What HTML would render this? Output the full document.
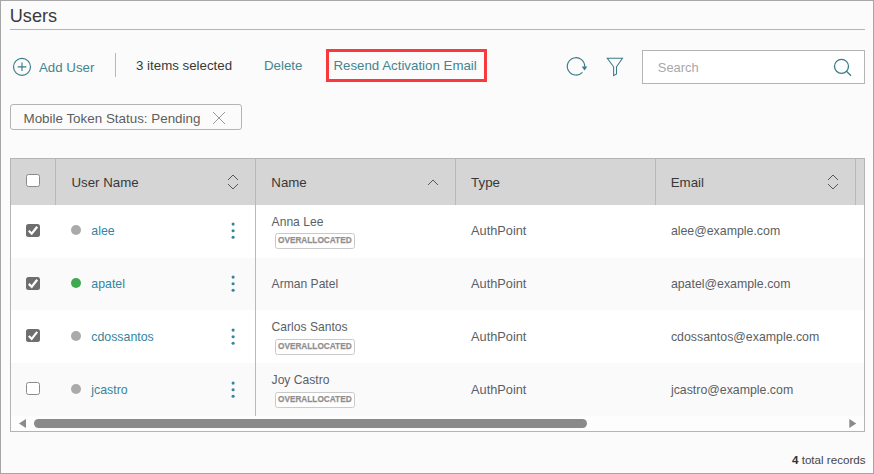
<!DOCTYPE html><html><head><meta charset="utf-8"><style>
html,body{margin:0;padding:0;}
body{width:874px;height:474px;overflow:hidden;position:relative;background:#fbfbfb;font-family:"Liberation Sans",sans-serif;}
.t{position:absolute;white-space:nowrap;}
.b{position:absolute;box-sizing:border-box;}
svg{position:absolute;left:0;top:0;overflow:visible;}
</style></head><body>
<div class="b" style="left:0;top:0;width:874px;height:474px;border:1px solid #a6a6a6;"></div>
<div class="t" style="left:9.8px;top:6.58px;font-size:18.1px;line-height:18.1px;color:#3a3a3a;font-weight:normal;">Users</div>
<div class="b" style="left:10px;top:29px;width:855px;height:1px;background:#b4b4b4;"></div>
<svg width="874" height="474"><circle cx="22" cy="66.8" r="8.5" fill="none" stroke="#3a7b89" stroke-width="1.15"/><path d="M22 62.5V71.1M17.7 66.8H26.3" stroke="#3a7b89" stroke-width="1.15"/></svg>
<div class="t" style="left:39px;top:60.64px;font-size:13.3px;line-height:13.3px;color:#438591;font-weight:normal;">Add User</div>
<div class="b" style="left:115px;top:53px;width:1px;height:24px;background:#b8b8b8;"></div>
<div class="t" style="left:136px;top:58.64px;font-size:13.3px;line-height:13.3px;color:#383838;font-weight:normal;">3 items selected</div>
<div class="t" style="left:264px;top:58.94px;font-size:13.3px;line-height:13.3px;color:#438591;font-weight:normal;">Delete</div>
<div class="b" style="left:326px;top:49px;width:161px;height:33px;border:3px solid #f83a3d;"></div>
<div class="t" style="left:333.4px;top:58.94px;font-size:13.3px;line-height:13.3px;color:#438591;font-weight:normal;">Resend Activation Email</div>
<svg width="874" height="474"><path d="M582.4 72.3 A8.7 8.7 0 1 1 584.7 66.8" fill="none" stroke="#3a7b89" stroke-width="1.15"/><path d="M581.7 66.6 L587.3 66.6 L584.5 70.5 Z" fill="#3a7b89"/></svg>
<svg width="874" height="474"><path d="M607.3 58.3 H622.5 L616.5 66.8 V73.9 L613.6 75.6 V66.8 Z" fill="none" stroke="#3a7b89" stroke-width="1.05"/></svg>
<div class="b" style="left:642px;top:50px;width:223px;height:34px;border:1px solid #b4b4b4;background:#fff;border-radius:0;"></div>
<div class="t" style="left:657.8px;top:62.28px;font-size:12.9px;line-height:12.9px;color:#a8a8a8;font-weight:normal;">Search</div>
<svg width="874" height="474"><circle cx="841.5" cy="66.3" r="7" fill="none" stroke="#3a7b89" stroke-width="1.3"/><path d="M846.5 71.3 L851 75.7" stroke="#3a7b89" stroke-width="1.3"/></svg>
<div class="b" style="left:10px;top:104px;width:232px;height:26px;border:1px solid #b4b4b4;border-radius:3px;background:#fbfbfb;"></div>
<div class="t" style="left:23.5px;top:111.86px;font-size:13.4px;line-height:13.4px;color:#5e5e5e;font-weight:normal;">Mobile Token Status: Pending</div>
<svg width="874" height="474"><path d="M213 112 L225 124 M225 112 L213 124" stroke="#9a9a9a" stroke-width="1"/></svg>
<div class="b" style="left:10px;top:158px;width:855px;height:274px;border:1px solid #b4b4b4;background:#fff;"></div>
<div class="b" style="left:11px;top:159px;width:853px;height:46px;background:#d5d5d5;"></div>
<div class="b" style="left:55px;top:159px;width:1px;height:46px;background:#b9b9b9;"></div>
<div class="b" style="left:255px;top:159px;width:1px;height:46px;background:#b9b9b9;"></div>
<div class="b" style="left:455px;top:159px;width:1px;height:46px;background:#b9b9b9;"></div>
<div class="b" style="left:655px;top:159px;width:1px;height:46px;background:#b9b9b9;"></div>
<div class="b" style="left:855px;top:159px;width:1px;height:46px;background:#b9b9b9;"></div>
<div class="b" style="left:26px;top:174px;width:13.5px;height:13px;border:1.3px solid #8a8a8a;border-radius:2.5px;background:#fff;"></div>
<div class="t" style="left:71.4px;top:175.84px;font-size:13.3px;line-height:13.3px;color:#383838;font-weight:normal;">User Name</div>
<div class="t" style="left:271.3px;top:175.84px;font-size:13.3px;line-height:13.3px;color:#383838;font-weight:normal;">Name</div>
<div class="t" style="left:471.1px;top:175.84px;font-size:13.3px;line-height:13.3px;color:#383838;font-weight:normal;">Type</div>
<div class="t" style="left:670.7px;top:175.84px;font-size:13.3px;line-height:13.3px;color:#383838;font-weight:normal;">Email</div>
<svg width="874" height="474"><path d="M228 180 L233 175 L238 180 M228 184 L233 189 L238 184" fill="none" stroke="#4a4a4a" stroke-width="0.9"/></svg>
<svg width="874" height="474"><path d="M828 180 L833 175 L838 180 M828 184 L833 189 L838 184" fill="none" stroke="#4a4a4a" stroke-width="0.9"/></svg>
<svg width="874" height="474"><path d="M428 185 L433 180 L438 185" fill="none" stroke="#4a4a4a" stroke-width="0.9"/></svg>
<div class="b" style="left:11px;top:205px;width:853px;height:53px;background:#fff;"></div>
<div class="b" style="left:26px;top:223.8px;width:13.5px;height:13px;background:#6e6e6e;border-radius:2.5px;"></div>
<svg width="874" height="474"><path d="M28.8 230.8 L31.7 233.7 L37.2 226.7" fill="none" stroke="#fff" stroke-width="2.2"/></svg>
<div class="b" style="left:71px;top:225px;width:10px;height:10px;border-radius:50%;background:#aaaaaa;"></div>
<div class="t" style="left:91.3px;top:225.35px;font-size:12.35px;line-height:12.35px;color:#3584a0;font-weight:normal;">alee</div>
<svg width="874" height="474"><circle cx="233.1" cy="224.1" r="1.55" fill="#3584a0"/><circle cx="233.1" cy="230.7" r="1.55" fill="#3584a0"/><circle cx="233.1" cy="237.3" r="1.55" fill="#3584a0"/></svg>
<div class="t" style="left:271.6px;top:215.86px;font-size:12.1px;line-height:12.1px;color:#5a5f65;font-weight:normal;">Anna Lee</div>
<div class="b" style="left:275px;top:233px;width:80px;height:16px;border:1px solid #c9c9c9;border-radius:2.5px;background:#fff;"></div>
<div class="t" style="left:278.1px;top:234.82px;font-size:9.9px;line-height:9.9px;color:#8f8f8f;font-weight:bold;transform:scaleX(0.835);transform-origin:0 0;-webkit-text-stroke:0.25px #8f8f8f;">OVERALLOCATED</div>
<div class="t" style="left:471.1px;top:224.81px;font-size:12.75px;line-height:12.75px;color:#5a5f65;font-weight:normal;">AuthPoint</div>
<div class="t" style="left:670.9px;top:225.15px;font-size:12.35px;line-height:12.35px;color:#5a5f65;font-weight:normal;">alee@example.com</div>
<div class="b" style="left:11px;top:258px;width:853px;height:52px;background:#fafafa;"></div>
<div class="b" style="left:26px;top:276.9px;width:13.5px;height:13px;background:#6e6e6e;border-radius:2.5px;"></div>
<svg width="874" height="474"><path d="M28.8 283.9 L31.7 286.8 L37.2 279.8" fill="none" stroke="#fff" stroke-width="2.2"/></svg>
<div class="b" style="left:71px;top:278px;width:10px;height:10px;border-radius:50%;background:#3daa4f;"></div>
<div class="t" style="left:91.3px;top:278.35px;font-size:12.35px;line-height:12.35px;color:#3584a0;font-weight:normal;">apatel</div>
<svg width="874" height="474"><circle cx="233.1" cy="277.1" r="1.55" fill="#3584a0"/><circle cx="233.1" cy="283.7" r="1.55" fill="#3584a0"/><circle cx="233.1" cy="290.3" r="1.55" fill="#3584a0"/></svg>
<div class="t" style="left:271.6px;top:278.16px;font-size:12.1px;line-height:12.1px;color:#5a5f65;font-weight:normal;">Arman Patel</div>
<div class="t" style="left:471.1px;top:277.81px;font-size:12.75px;line-height:12.75px;color:#5a5f65;font-weight:normal;">AuthPoint</div>
<div class="t" style="left:670.9px;top:278.15px;font-size:12.35px;line-height:12.35px;color:#5a5f65;font-weight:normal;">apatel@example.com</div>
<div class="b" style="left:11px;top:310px;width:853px;height:53px;background:#fff;"></div>
<div class="b" style="left:26px;top:329px;width:13.5px;height:13px;background:#6e6e6e;border-radius:2.5px;"></div>
<svg width="874" height="474"><path d="M28.8 336.0 L31.7 338.9 L37.2 331.9" fill="none" stroke="#fff" stroke-width="2.2"/></svg>
<div class="b" style="left:71px;top:331px;width:10px;height:10px;border-radius:50%;background:#aaaaaa;"></div>
<div class="t" style="left:91.3px;top:331.35px;font-size:12.35px;line-height:12.35px;color:#3584a0;font-weight:normal;">cdossantos</div>
<svg width="874" height="474"><circle cx="233.1" cy="330.1" r="1.55" fill="#3584a0"/><circle cx="233.1" cy="336.7" r="1.55" fill="#3584a0"/><circle cx="233.1" cy="343.3" r="1.55" fill="#3584a0"/></svg>
<div class="t" style="left:271.6px;top:320.86px;font-size:12.1px;line-height:12.1px;color:#5a5f65;font-weight:normal;">Carlos Santos</div>
<div class="b" style="left:275px;top:339px;width:80px;height:16px;border:1px solid #c9c9c9;border-radius:2.5px;background:#fff;"></div>
<div class="t" style="left:278.1px;top:340.82px;font-size:9.9px;line-height:9.9px;color:#8f8f8f;font-weight:bold;transform:scaleX(0.835);transform-origin:0 0;-webkit-text-stroke:0.25px #8f8f8f;">OVERALLOCATED</div>
<div class="t" style="left:471.1px;top:330.81px;font-size:12.75px;line-height:12.75px;color:#5a5f65;font-weight:normal;">AuthPoint</div>
<div class="t" style="left:670.9px;top:331.15px;font-size:12.35px;line-height:12.35px;color:#5a5f65;font-weight:normal;">cdossantos@example.com</div>
<div class="b" style="left:11px;top:363px;width:853px;height:53px;background:#fafafa;"></div>
<div class="b" style="left:26px;top:381.9px;width:13.5px;height:13px;border:1.3px solid #8a8a8a;border-radius:2.5px;background:#fff;"></div>
<div class="b" style="left:71px;top:384px;width:10px;height:10px;border-radius:50%;background:#aaaaaa;"></div>
<div class="t" style="left:91.3px;top:384.35px;font-size:12.35px;line-height:12.35px;color:#3584a0;font-weight:normal;">jcastro</div>
<svg width="874" height="474"><circle cx="233.1" cy="383.1" r="1.55" fill="#3584a0"/><circle cx="233.1" cy="389.7" r="1.55" fill="#3584a0"/><circle cx="233.1" cy="396.3" r="1.55" fill="#3584a0"/></svg>
<div class="t" style="left:271.6px;top:373.86px;font-size:12.1px;line-height:12.1px;color:#5a5f65;font-weight:normal;">Joy Castro</div>
<div class="b" style="left:275px;top:392px;width:80px;height:16px;border:1px solid #c9c9c9;border-radius:2.5px;background:#fff;"></div>
<div class="t" style="left:278.1px;top:393.82px;font-size:9.9px;line-height:9.9px;color:#8f8f8f;font-weight:bold;transform:scaleX(0.835);transform-origin:0 0;-webkit-text-stroke:0.25px #8f8f8f;">OVERALLOCATED</div>
<div class="t" style="left:471.1px;top:383.81px;font-size:12.75px;line-height:12.75px;color:#5a5f65;font-weight:normal;">AuthPoint</div>
<div class="t" style="left:670.9px;top:384.15px;font-size:12.35px;line-height:12.35px;color:#5a5f65;font-weight:normal;">jcastro@example.com</div>
<div class="b" style="left:255px;top:205px;width:1px;height:211px;background:#b9b9b9;"></div>
<div class="b" style="left:11px;top:416px;width:853px;height:15px;background:#fdfdfd;"></div>
<div class="b" style="left:34px;top:419px;width:553px;height:9px;border-radius:4.5px;background:#8a8a8a;"></div>
<svg width="874" height="474"><path d="M19 423.5 L26 419 L26 428 Z" fill="#8a8a8a"/><path d="M856.3 423.5 L849.3 419 L849.3 428 Z" fill="#8a8a8a"/></svg>
<div class="t" style="right:8.5px;top:454.38px;font-size:11.6px;line-height:11.6px;color:#444;font-weight:normal;"><b style="color:#333">4</b> total records</div>
</body></html>
